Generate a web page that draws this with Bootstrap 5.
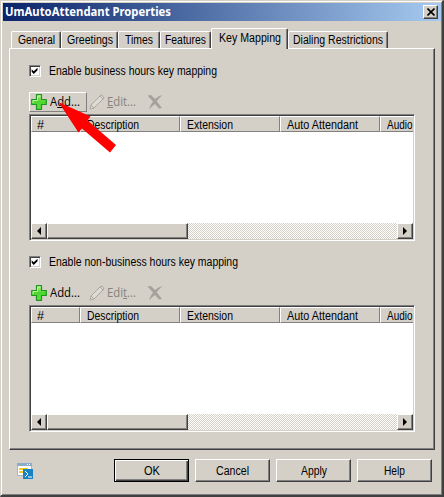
<!DOCTYPE html>
<html lang="en">
<head>
<meta charset="utf-8">
<meta name="viewport" content="width=device-width, initial-scale=1">
<title>UmAutoAttendant Properties</title>
<link href="https://cdn.jsdelivr.net/npm/bootstrap@5.3.0/dist/css/bootstrap.min.css" rel="stylesheet">
<style>
:root{--face:#d4d0c8;--dk:#404040;--sh:#808080}
body{font:12px/14px "Liberation Sans",Arial,sans-serif;color:#000;background:var(--face);overflow:hidden}
.dialog{width:444px;height:497px;background:var(--face);border:1px solid var(--face);border-right:2px solid var(--dk);border-bottom:2px solid var(--dk);box-shadow:inset 1px 1px #fff,inset -1px -1px var(--sh);padding:2px 2px 0}
.caption{height:18px;width:438px;background:linear-gradient(90deg,#0a246a,#a6caf0);padding:0 3px 0 2px}
.caption-text{font:bold 12px/18px "Noto Sans",sans-serif;color:#fff;white-space:nowrap;height:18px}
.t{display:inline-block;white-space:nowrap;transform-origin:0 50%}
.raised{background:var(--face);border:1px solid;border-color:#fff var(--dk) var(--dk) #fff;box-shadow:inset -1px -1px var(--sh);border-radius:0;padding:0;color:#000;font-size:12px;line-height:14px}
.close-box{width:15px;height:14px}
.tabs{height:27px;padding-left:8px}
.tabx{height:17px;border:1px solid;border-color:#fff var(--dk) transparent #fff;border-bottom:0;border-radius:2px 2px 0 0;box-shadow:inset -1px 0 var(--sh);padding-top:1px;text-align:center;white-space:nowrap}
.tabx.active{height:21px;margin-bottom:-1px;z-index:2;position:relative;background:var(--face);padding-top:2px}
.panel{width:426px;height:402px;margin-left:6px;border:1px solid;border-color:#fff var(--dk) var(--dk) #fff;box-shadow:inset -1px -1px var(--sh);padding:15px 19px 0}
.checkline{height:13px}
.listbox + .checkline{margin-top:14px}
.checkbox{width:12px;height:12px;background:#fff;border:1px solid;border-color:var(--sh) #fff #fff var(--sh);box-shadow:inset 1px 1px var(--dk),inset -1px -1px var(--face)}
.tools{height:22px;margin-top:15px;font-family:"Open Sans",sans-serif}
.tool-add{width:58px;height:20px;border:1px solid transparent;padding-left:1px;gap:3px}
.tool-add.hot{border-color:#fff var(--sh) var(--sh) #fff}
.off{color:#85837e;height:20px;margin-left:2px;gap:2px}
.off .cross{margin-left:9px}
.listbox{width:386px;height:127px;background:#fff;border:1px solid;border-color:var(--sh) #fff #fff var(--sh);box-shadow:inset 1px 1px var(--dk),inset -1px -1px var(--face);padding:1px}
.heads{height:16px;overflow:hidden}
.head-cell{height:16px;width:100px;background:var(--face);border:1px solid;border-color:#fff var(--sh) var(--sh) #fff;padding-left:6px;flex:none;line-height:17px;white-space:nowrap}
.head-cell:first-child{width:49px;padding-left:5px}
.head-cell:last-child{width:33px;border-right:0}
.scroll{height:16px;background:repeating-conic-gradient(#fff 0 25%,#d4d0c8 0 50%) 0 0/2px 2px}
.arrow{width:16px;height:16px}
.thumb{width:141px;height:16px}
.foot{height:23px;margin-top:9px;padding:0 8px 0 14px}
.buttons{gap:6px}
.push{width:75px;height:23px}
.push.main{border:1px solid #000;box-shadow:inset 1px 1px #fff,inset -1px -1px var(--dk),inset -2px -2px var(--sh)}
.pointer{position:absolute;left:57px;top:98px;z-index:5}
svg{display:block;flex:none}
</style>
</head>
<body>
<svg width="0" height="0" class="position-absolute" aria-hidden="true">
<defs>
<linearGradient id="green" x2="0" y2="1"><stop stop-color="#b0f080"/><stop offset=".5" stop-color="#4bd52c"/><stop offset="1" stop-color="#64e044"/></linearGradient>
<symbol id="plus" viewBox="0 0 16 16"><path d="M5.500.700h5v4.800h4.800v5h-4.800v4.800h-5v-4.800H.700v-5h4.800z" fill="url(#green)" stroke="#209420" stroke-width="1.200" stroke-linejoin="round"/><path d="M6.500 6V2h3M2 9V6.500h4.500" fill="none" stroke="#c5f7aa"/></symbol>
<symbol id="pencil" viewBox="0 0 16 16"><path d="M1 15l1-4L12 1q2 0 3 3L5 14zM2 11l3 3M11 2l3 3" fill="#dedbd4" stroke="#aaa7a1" stroke-width="1"/></symbol>
<symbol id="cross" viewBox="0 0 16 16"><path d="M.500 1.500L4 1l4 4Q11 2 15.500 1 12 4 9.700 7.200L15 14l-3 .500-4-4.500Q5 12 2 15.500 3 11 6 7.500z" fill="#a5a29c"/></symbol>
<symbol id="check" viewBox="0 0 12 12"><path d="M2 4v3l2.500 2.500L9 5V2L4.500 6.300z" fill="#000"/></symbol>
</defs></svg>
<main class="dialog position-relative">
<header class="caption d-flex align-items-center justify-content-between"><span class="caption-text"><span class="t" data-w="166">UmAutoAttendant Properties</span></span>
<button class="raised close-box d-flex align-items-center justify-content-center" aria-label="Close"><svg width="8" height="8" viewBox="0 0 8 8"><path d="M.500.500l7 7M7.500.500l-7 7" stroke="#000" stroke-width="1.600"/></svg></button></header>
<nav class="tabs d-flex align-items-end">
<div class="tabx" style="width:50px"><span class="t" data-w="37">General</span></div>
<div class="tabx" style="width:57px"><span class="t" data-w="46">Greetings</span></div>
<div class="tabx" style="width:42px"><span class="t" data-w="28">Times</span></div>
<div class="tabx" style="width:51px"><span class="t" data-w="41">Features</span></div>
<div class="tabx active" style="width:77px"><span class="t" data-w="62">Key Mapping</span></div>
<div class="tabx" style="width:100px"><span class="t" data-w="90">Dialing Restrictions</span></div>
</nav>
<section class="panel">
<div class="checkline d-flex align-items-center"><span class="checkbox"><svg width="10" height="10"><use href="#check"/></svg></span><span class="t ms-2" data-w="168">Enable business hours key mapping</span></div>
<div class="tools d-flex"><div class="tool-add hot d-flex align-items-center"><svg width="16" height="16"><use href="#plus"/></svg><span class="t" data-w="30">A<u>d</u>d...</span></div><div class="off d-flex align-items-center"><svg width="16" height="16"><use href="#pencil"/></svg><span class="t" data-w="29"><u>E</u>dit...</span><svg class="cross" width="16" height="16"><use href="#cross"/></svg></div></div>
<div class="listbox d-flex flex-column justify-content-between"><div class="heads d-flex"><div class="head-cell"><span class="t" data-w="7">#</span></div><div class="head-cell"><span class="t" data-w="52">Description</span></div><div class="head-cell"><span class="t" data-w="46">Extension</span></div><div class="head-cell"><span class="t" data-w="71">Auto Attendant</span></div><div class="head-cell"><span class="t" data-w="25.500">Audio</span></div></div>
<div class="scroll d-flex"><div class="raised arrow"><svg width="14" height="14"><path d="M9 3v8L5 7z"/></svg></div><div class="raised thumb"></div><div class="raised arrow ms-auto"><svg width="14" height="14"><path d="M5 3v8l4-4z"/></svg></div></div></div>
<div class="checkline d-flex align-items-center"><span class="checkbox"><svg width="10" height="10"><use href="#check"/></svg></span><span class="t ms-2" data-w="189">Enable non-business hours key mapping</span></div>
<div class="tools d-flex"><div class="tool-add d-flex align-items-center"><svg width="16" height="16"><use href="#plus"/></svg><span class="t" data-w="30">Add...</span></div><div class="off d-flex align-items-center"><svg width="16" height="16"><use href="#pencil"/></svg><span class="t" data-w="29">Edi<u>t</u>...</span><svg class="cross" width="16" height="16"><use href="#cross"/></svg></div></div>
<div class="listbox d-flex flex-column justify-content-between"><div class="heads d-flex"><div class="head-cell"><span class="t" data-w="7">#</span></div><div class="head-cell"><span class="t" data-w="52">Description</span></div><div class="head-cell"><span class="t" data-w="46">Extension</span></div><div class="head-cell"><span class="t" data-w="71">Auto Attendant</span></div><div class="head-cell"><span class="t" data-w="25.500">Audio</span></div></div>
<div class="scroll d-flex"><div class="raised arrow"><svg width="14" height="14"><path d="M9 3v8L5 7z"/></svg></div><div class="raised thumb"></div><div class="raised arrow ms-auto"><svg width="14" height="14"><path d="M5 3v8l4-4z"/></svg></div></div></div>
</section>
<footer class="foot d-flex align-items-center"><svg width="16" height="16" viewBox="0 0 16 16"><path d="M.500 1.500h14v11H.500z" fill="#fff" stroke="#a8b5c7"/><path d="M0 0h15v3H0z" fill="#8baccb"/><path d="M10 1h1v1h-1zm2 0h1v1h-1z" fill="#fff"/><path d="M2 5h9v2H2zm0 3h4v2H2z" fill="#f1cd24"/><path d="M6 6h10v10H6z" fill="#1783c5"/><path d="M8 8l3 3-3 3M11 14h4" fill="none" stroke="#fff"/></svg>
<div class="buttons d-flex ms-auto"><button class="raised push main"><span class="t" data-w="16">OK</span></button><button class="raised push"><span class="t" data-w="33">Cancel</span></button><button class="raised push"><span class="t" data-w="26">Apply</span></button><button class="raised push"><span class="t" data-w="21">Help</span></button></div></footer>
<svg class="pointer" width="60" height="55" viewBox="0 0 60 55"><path d="M.500 3L32.500 17.500 29.500 21.500 58 46 52 53.500 24 29.500 20.500 33.500z" fill="#f00"/></svg>
</main>
<script src="https://cdn.jsdelivr.net/npm/bootstrap@5.3.0/dist/js/bootstrap.bundle.min.js"></script>
<script>
// Condense each label to its Tahoma-like width.
document.querySelectorAll('[data-w]').forEach(e=>{
  const w=e.getBoundingClientRect().width,target=+e.dataset.w;
  e.style.transform=`scaleX(${target/w})`;
  e.style.marginRight=`${target-w}px`;
});
</script>
</body>
</html>
